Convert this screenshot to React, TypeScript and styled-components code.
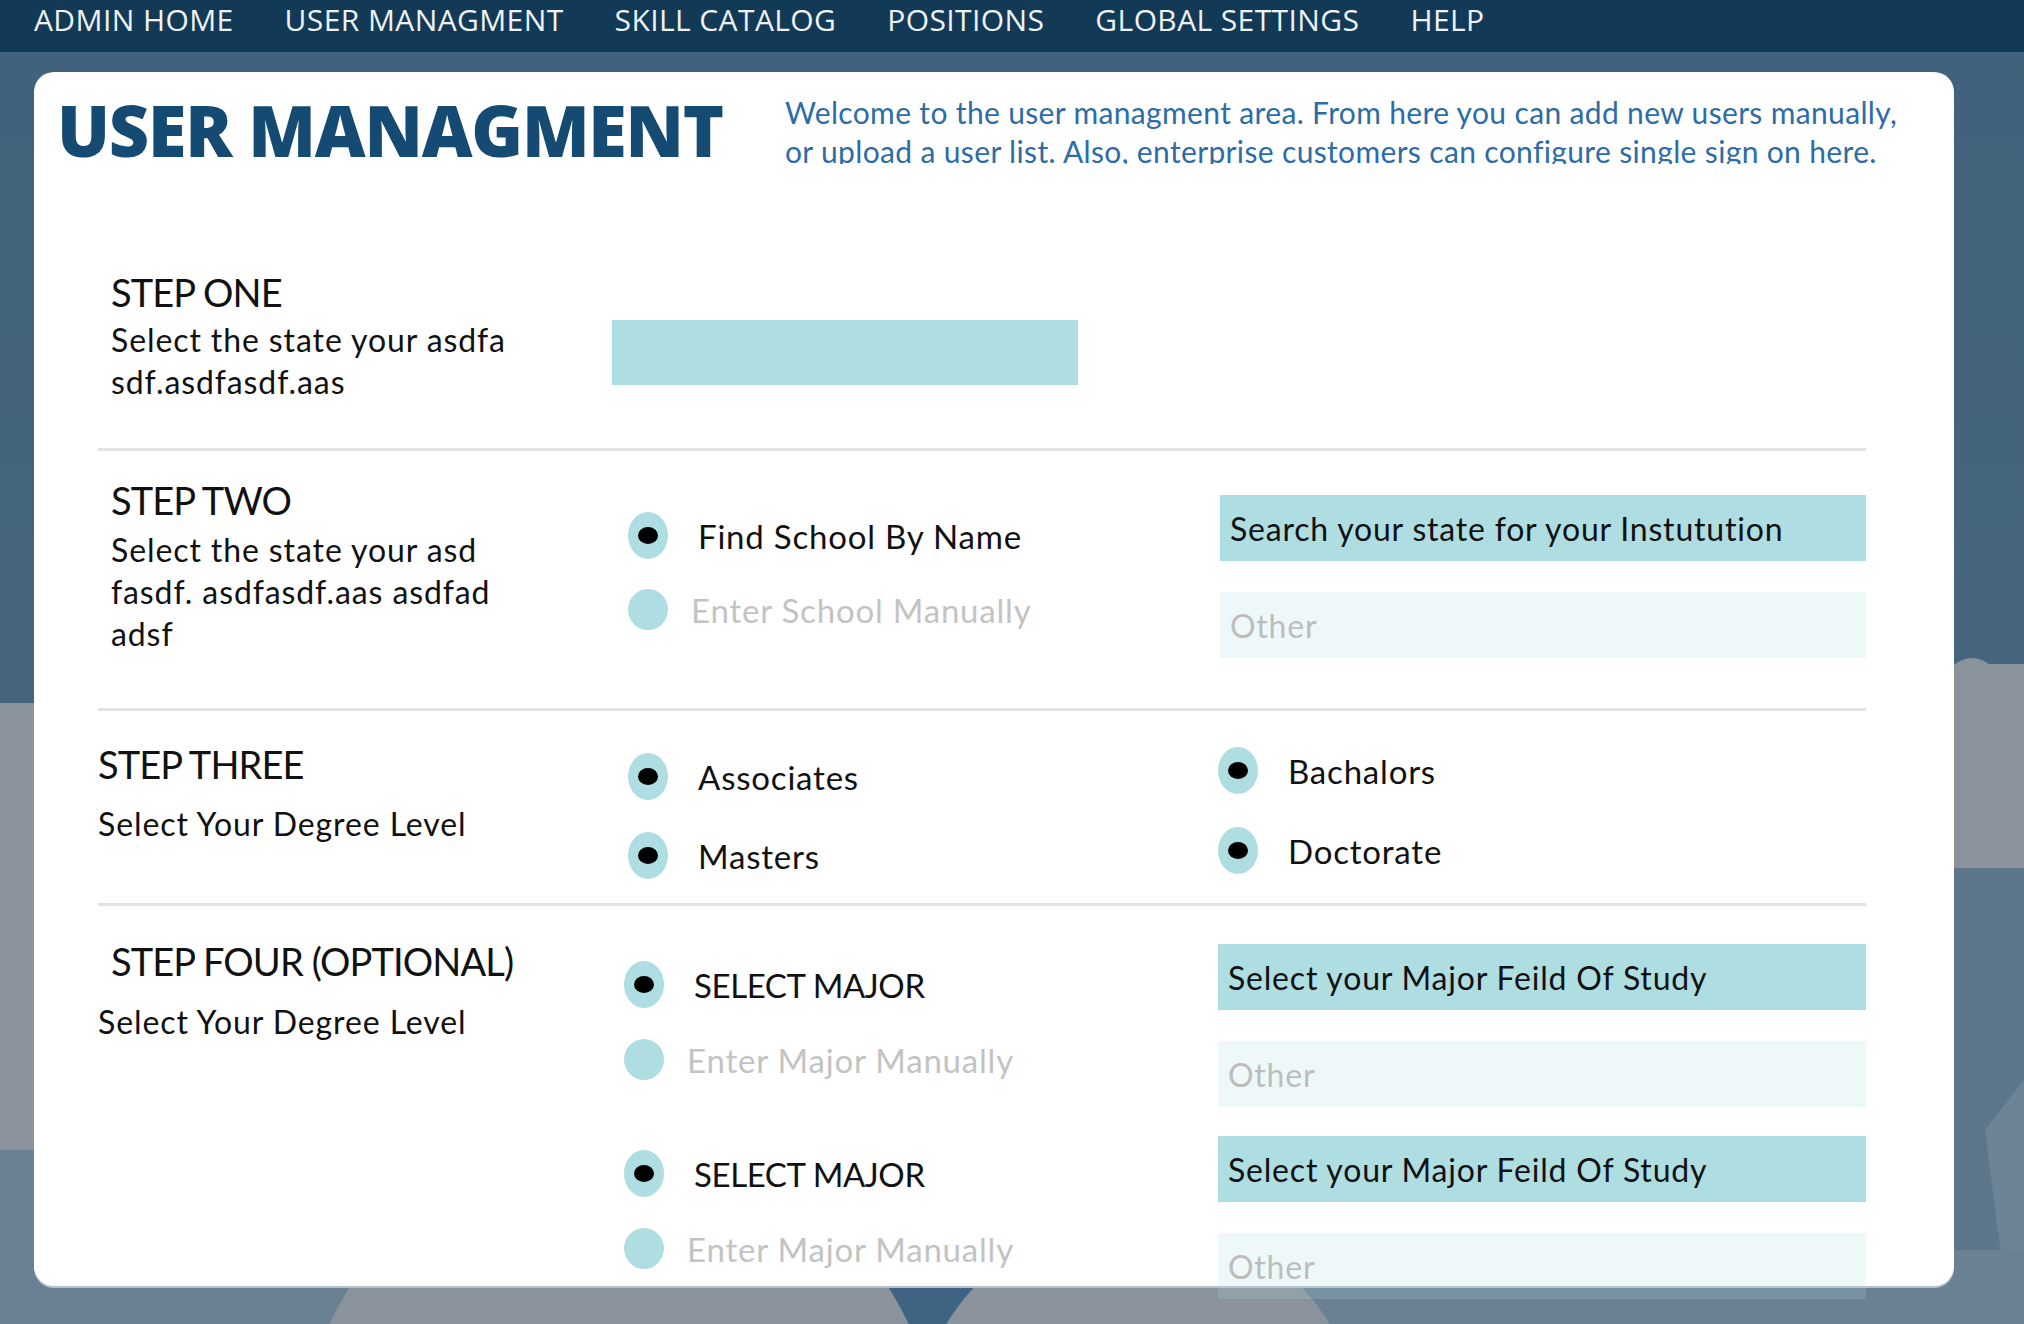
import React from "react";
import styled, { createGlobalStyle } from "styled-components";

const GlobalStyle = createGlobalStyle`
  html, body { margin: 0; padding: 0; }
  body {
    background: #45667f;
    font-family: Lato, "Open Sans", sans-serif;
    overflow: hidden;
  }
`;

const Page = styled.div`
  position: relative;
  width: 2024px;
  height: 1324px;
  overflow: hidden;
  background: #45667f;
`;

const Backdrop = styled.svg`
  position: absolute;
  top: 0;
  left: 0;
  width: 2024px;
  height: 1324px;
  z-index: 0;
`;

const NavBar = styled.nav`
  position: relative;
  z-index: 1;
  height: 52px;
  box-sizing: border-box;
  background: #123a56;
  display: flex;
  align-items: flex-start;
  gap: 51px;
  padding: 5px 0 0 34px;
`;

const NavLink = styled.a`
  font-family: "Open Sans", sans-serif;
  font-size: 30px;
  line-height: 30px;
  letter-spacing: 0.4px;
  color: #eef2f5;
  text-decoration: none;
  white-space: nowrap;
`;

const Card = styled.main`
  position: relative;
  z-index: 1;
  margin: 20px 0 0 34px;
  width: 1920px;
  height: 1214px;
  box-sizing: border-box;
  background: #ffffff;
  border-radius: 20px;
  box-shadow: 0 2px 0 #b9c1c8;
`;

const Header = styled.header`
  display: grid;
  grid-template-columns: 728px 1150px;
  height: 150px;
  padding-left: 23px;
  box-sizing: border-box;
`;

const Title = styled.h1`
  margin: 23px 0 0;
  font-family: "Open Sans", sans-serif;
  font-weight: 800;
  font-size: 70px;
  line-height: 70px;
  letter-spacing: -1.2px;
  color: #154b72;
  white-space: nowrap;
`;

const Intro = styled.p`
  margin: 21px 0 0;
  height: 71px;
  overflow: hidden;
  font-family: Lato, sans-serif;
  font-size: 30px;
  line-height: 39px;
  letter-spacing: 0.35px;
  color: #2d6ca6;
  white-space: nowrap;
`;

const Steps = styled.div`
  margin-left: 64px;
  width: 1768px;
`;

const Step = styled.section<{ $pt: number; $pb: number; $divider?: boolean }>`
  display: grid;
  grid-template-columns: 514px 606px 648px;
  align-items: start;
  padding: ${(p) => p.$pt}px 0 ${(p) => p.$pb}px;
  border-top: ${(p) => (p.$divider ? "3px solid #e3e3e3" : "none")};
`;

const LabelCol = styled.div`
  display: flex;
  flex-direction: column;
`;

const StepTitle = styled.h2<{ $indent: number }>`
  margin: 0;
  padding-left: ${(p) => p.$indent}px;
  font-family: Lato, sans-serif;
  font-weight: 400;
  font-size: 38px;
  line-height: 44px;
  letter-spacing: -0.9px;
  color: #111;
  white-space: nowrap;
`;

const StepText = styled.p<{ $indent: number; $gap: number }>`
  margin: ${(p) => p.$gap}px 0 0;
  padding-left: ${(p) => p.$indent}px;
  font-family: Lato, sans-serif;
  font-size: 32px;
  line-height: 42px;
  letter-spacing: 0.9px;
  color: #111;
  white-space: nowrap;
`;

const Column = styled.div<{ $top: number; $gap: number; $inset?: number }>`
  display: flex;
  flex-direction: column;
  margin-top: ${(p) => p.$top}px;
  padding-left: ${(p) => p.$inset ?? 0}px;
  gap: ${(p) => p.$gap}px;
`;

const Group = styled.div<{ $gap: number }>`
  display: flex;
  flex-direction: column;
  gap: ${(p) => p.$gap}px;
`;

const Option = styled.label<{ $on: boolean; $caps?: boolean }>`
  display: flex;
  align-items: center;
  gap: ${(p) => (p.$on ? 30 : 23)}px;
  font-family: Lato, sans-serif;
  font-size: 33px;
  letter-spacing: ${(p) => (p.$caps ? "-0.4px" : "0.8px")};
  color: ${(p) => (p.$on ? "#111" : "#c3c3c3")};
  white-space: nowrap;
`;

const RadioMark = styled.span<{ $on: boolean }>`
  flex: none;
  width: 40px;
  height: ${(p) => (p.$on ? 47 : 41)}px;
  border-radius: 50%;
  background: #aedde2;
  display: grid;
  place-items: center;
  &::after {
    content: "";
    display: ${(p) => (p.$on ? "block" : "none")};
    width: 20px;
    height: 17px;
    border-radius: 50%;
    background: #000;
  }
`;

const StateBar = styled.div`
  width: 466px;
  height: 65px;
  background: #aedde2;
`;

const Field = styled.div<{ $filled: boolean }>`
  height: 66px;
  box-sizing: border-box;
  padding-left: 10px;
  display: flex;
  align-items: center;
  background: ${(p) => (p.$filled ? "#aedde2" : "rgba(174, 221, 226, 0.2)")};
  font-family: Lato, sans-serif;
  font-size: 32px;
  letter-spacing: 0.8px;
  color: ${(p) => (p.$filled ? "#111" : "#bdbdbd")};
  white-space: nowrap;
`;

const Radio = ({ on, label, caps }: { on: boolean; label: string; caps?: boolean }) => (
  <Option $on={on} $caps={caps}>
    <RadioMark $on={on} />
    <span>{label}</span>
  </Option>
);

const navItems = [
  "ADMIN HOME",
  "USER MANAGMENT",
  "SKILL CATALOG",
  "POSITIONS",
  "GLOBAL SETTINGS",
  "HELP",
];

export default function App() {
  return (
    <Page>
      <GlobalStyle />
      <Backdrop viewBox="0 0 2024 1324" aria-hidden="true">
        <defs>
          <linearGradient id="sky" x1="0" y1="0" x2="0" y2="1">
            <stop offset="0" stopColor="#41627c" />
            <stop offset="1" stopColor="#48697f" />
          </linearGradient>
        </defs>
        <rect x="0" y="0" width="2024" height="1324" fill="url(#sky)" />
        <rect x="0" y="703" width="80" height="447" fill="#8a939c" />
        <rect x="0" y="1150" width="80" height="174" fill="#6a8093" />
        <rect x="1900" y="664" width="124" height="204" fill="#8a939c" />
        <circle cx="1972" cy="684" r="26" fill="#8a939c" />
        <rect x="1900" y="868" width="124" height="456" fill="#5e768a" />
        <polygon points="1985,1130 2024,1080 2024,1324 2010,1324" fill="#6d8496" />
        <rect x="0" y="1250" width="2024" height="74" fill="#6a8093" />
        <rect x="860" y="1250" width="140" height="74" fill="#3f6382" />
        <circle cx="619" cy="1460" r="320" fill="#8a939c" />
        <circle cx="1138" cy="1440" r="224" fill="#8a939c" />
      </Backdrop>

      <NavBar>
        {navItems.map((n) => (
          <NavLink key={n} href="#">
            {n}
          </NavLink>
        ))}
      </NavBar>

      <Card>
        <Header>
          <Title>USER MANAGMENT</Title>
          <Intro>
            Welcome to the user managment area. From here you can add new users manually,
            <br />
            or upload a user list. Also, enterprise customers can configure single sign on here.
          </Intro>
        </Header>

        <Steps>
          <Step $pt={48} $pb={45}>
            <LabelCol>
              <StepTitle $indent={13}>STEP ONE</StepTitle>
              <StepText $indent={13} $gap={5}>
                Select the state your asdfa
                <br />
                sdf.asdfasdf.aas
              </StepText>
            </LabelCol>
            <Column $top={50} $gap={0}>
              <StateBar />
            </Column>
            <div />
          </Step>

          <Step $divider $pt={27} $pb={50}>
            <LabelCol>
              <StepTitle $indent={13}>STEP TWO</StepTitle>
              <StepText $indent={13} $gap={7}>
                Select the state your asd
                <br />
                fasdf. asdfasdf.aas asdfad
                <br />
                adsf
              </StepText>
            </LabelCol>
            <Column $top={34} $gap={30} $inset={16}>
              <Radio on label="Find School By Name" />
              <Radio on={false} label="Enter School Manually" />
            </Column>
            <Column $top={17} $gap={31} $inset={2}>
              <Field $filled>Search your state for your Instutution</Field>
              <Field $filled={false}>Other</Field>
            </Column>
          </Step>

          <Step $divider $pt={31} $pb={24}>
            <LabelCol>
              <StepTitle $indent={0}>STEP THREE</StepTitle>
              <StepText $indent={0} $gap={17}>
                Select Your Degree Level
              </StepText>
            </LabelCol>
            <Column $top={11} $gap={32} $inset={16}>
              <Radio on label="Associates" />
              <Radio on label="Masters" />
            </Column>
            <Column $top={5} $gap={33} $inset={-3}>
              <Radio on label="Bachalors" />
              <Radio on label="Doctorate" />
            </Column>
          </Step>

          <Step $divider $pt={33} $pb={0}>
            <LabelCol>
              <StepTitle $indent={13}>STEP FOUR (OPTIONAL)</StepTitle>
              <StepText $indent={0} $gap={18}>
                Select Your Degree Level
              </StepText>
            </LabelCol>
            <Column $top={22} $gap={70} $inset={12}>
              <Group $gap={31}>
                <Radio on caps label="SELECT MAJOR" />
                <Radio on={false} label="Enter Major Manually" />
              </Group>
              <Group $gap={31}>
                <Radio on caps label="SELECT MAJOR" />
                <Radio on={false} label="Enter Major Manually" />
              </Group>
            </Column>
            <Column $top={5} $gap={29}>
              <Group $gap={31}>
                <Field $filled>Select your Major Feild Of Study</Field>
                <Field $filled={false}>Other</Field>
              </Group>
              <Group $gap={31}>
                <Field $filled>Select your Major Feild Of Study</Field>
                <Field $filled={false}>Other</Field>
              </Group>
            </Column>
          </Step>
        </Steps>
      </Card>
    </Page>
  );
}
